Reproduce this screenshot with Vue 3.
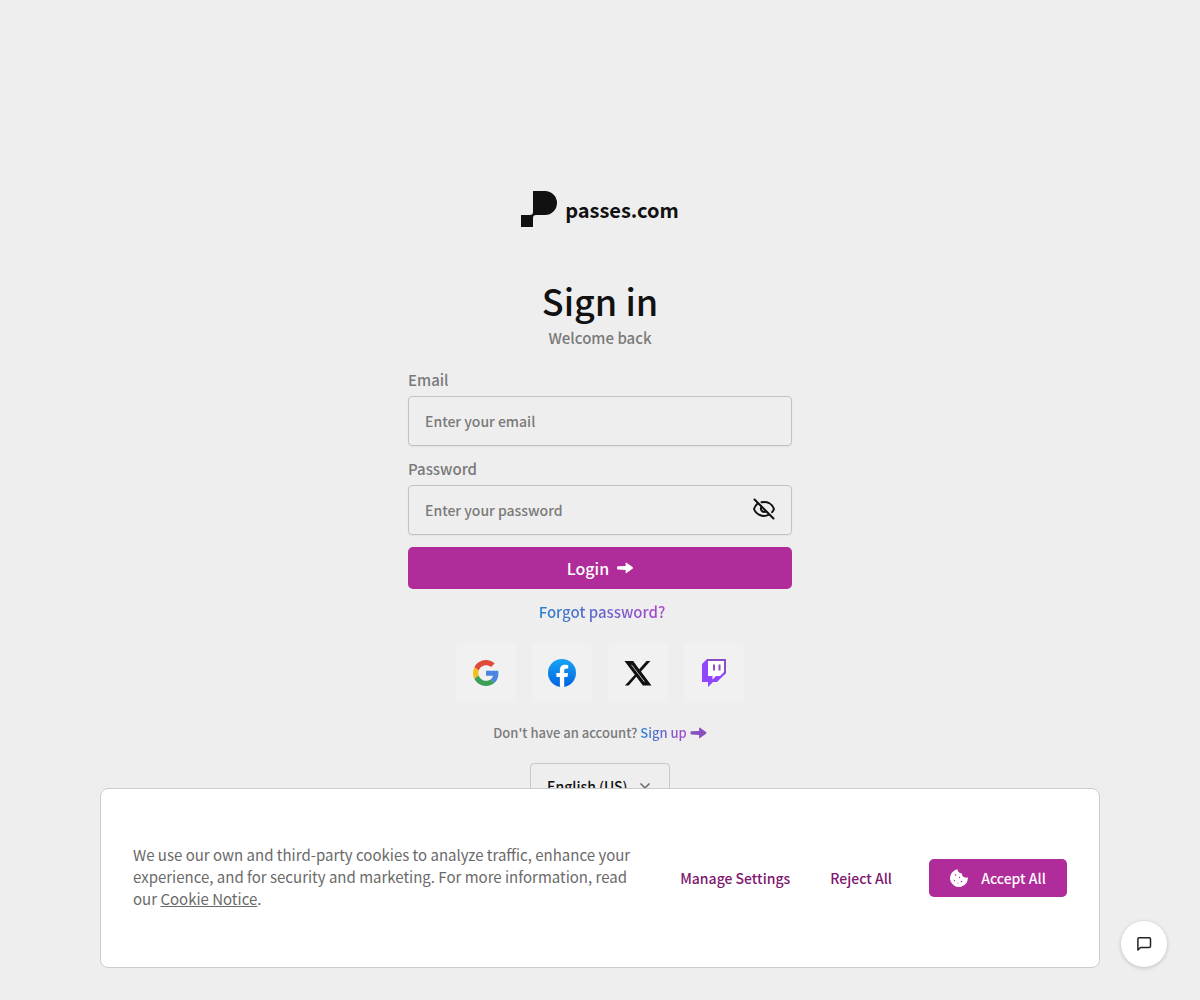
<script setup>
import { ref } from 'vue'

const email = ref('')
const password = ref('')
const showPassword = ref(false)
const language = ref('en-US')
</script>

<template>
  <div class="page">
    <main class="signin">
      <a class="brand" href="#">
        <svg width="36" height="36" viewBox="0 0 36 36" aria-hidden="true">
          <path d="M12 0h12a12 12 0 0 1 0 24h-9q-3 0-3 3v9H0V24h9q3 0 3-3z" fill="#111" />
        </svg>
        <span class="brand-name">passes.com</span>
      </a>

      <h1>Sign in</h1>
      <p class="welcome">Welcome back</p>

      <form class="form" @submit.prevent>
        <label for="email">Email</label>
        <input id="email" v-model="email" class="field" type="email" placeholder="Enter your email" />

        <label for="password">Password</label>
        <div class="password">
          <input
            id="password"
            v-model="password"
            class="field"
            :type="showPassword ? 'text' : 'password'"
            placeholder="Enter your password"
          />
          <button class="reveal" type="button" aria-label="Show password" @click="showPassword = !showPassword">
            <svg width="24" height="24" viewBox="0 0 24 24" fill="none" stroke="#111" stroke-width="2" stroke-linecap="round" aria-hidden="true">
              <path d="M2.5 2.5l19 19" />
              <path d="M9.5 5.3C15 4 20 6.500 22 12c-.5 1.300-1.100 2.300-1.900 3.200" />
              <path d="M5.600 6.500C3.900 8 2.800 9.700 2 12c2.500 6.300 9.500 8.600 14.800 5.600" />
              <path d="M9.300 9.800c-1.500 3.200 1.700 6.300 4.900 4.900" />
            </svg>
          </button>
        </div>

        <button class="primary login" type="submit">
          Login
          <svg width="16" height="12" viewBox="0 0 16 12" fill="#fff" aria-hidden="true">
            <path d="M1 4.300l7.600-.3V1.200Q8.600.2 9.500.7l6 4.300q1 .9 0 1.700l-6 4.400q-.9.500-.9-.5V8L1 7.600Q0 7.500 0 6.500V5.300Q0 4.400 1 4.300z" />
          </svg>
        </button>
      </form>

      <a class="forgot gradient" href="#">Forgot password?</a>

      <div class="socials">
        <button type="button" aria-label="Continue with Google">
          <svg width="26" height="26" viewBox="0 0 48 48" aria-hidden="true">
            <path fill="#e04a3a" d="M24 9.500c3.540 0 6.710 1.220 9.210 3.600l6.850-6.850C35.900 2.380 30.470 0 24 0 14.620 0 6.510 5.380 2.560 13.220l7.980 6.190C12.430 13.720 17.740 9.500 24 9.500z" />
            <path fill="#4a86e0" d="M46.980 24.550c0-1.570-.15-3.090-.38-4.550H24v9.020h12.940c-.58 2.960-2.260 5.480-4.780 7.180l7.730 6c4.510-4.180 7.090-10.360 7.090-17.650z" />
            <path fill="#f2c01c" d="M10.530 28.590A14.500 14.500 0 0 1 9.770 24c0-1.600.27-3.140.76-4.590l-7.980-6.190A23.900 23.900 0 0 0 0 24c0 3.880.92 7.540 2.560 10.780z" />
            <path fill="#3b9f58" d="M24 48c6.480 0 11.930-2.130 15.890-5.810l-7.730-6c-2.150 1.450-4.920 2.300-8.160 2.300-6.260 0-11.570-4.220-13.470-9.910l-7.980 6.190C6.510 42.620 14.620 48 24 48z" />
          </svg>
        </button>
        <button type="button" aria-label="Continue with Facebook">
          <svg width="28" height="28" viewBox="0 0 28 28" aria-hidden="true">
            <defs>
              <linearGradient id="fb" x1="0" y1="0" x2="0" y2="1">
                <stop offset="0" stop-color="#18a4f4" />
                <stop offset="1" stop-color="#0163e0" />
              </linearGradient>
            </defs>
            <circle cx="14" cy="14" r="14" fill="url(#fb)" />
            <path fill="#fff" d="M19.450 18.050l.62-3.930H16.200v-2.560c0-1.070.54-2.120 2.250-2.120h1.740V6.090s-1.580-.26-3.090-.26c-3.150 0-5.200 1.860-5.200 5.230v3.060H8.400v3.930h3.500v9.790a14 14 0 0 0 4.300 0v-9.790z" />
          </svg>
        </button>
        <button type="button" aria-label="Continue with X">
          <svg width="28" height="26" viewBox="0 0 28 26" aria-hidden="true">
            <path fill="#111" d="M.5 1h8.700l6 8.300L22.500 1h3.900l-9.400 10.400L27.500 25.500h-8.700l-6.500-8.700-7.600 8.700H.9l9.900-10.800z" />
            <path d="M7.500 4.800l13 17" stroke="#bbb" stroke-width="1" />
          </svg>
        </button>
        <button type="button" aria-label="Continue with Twitch">
          <svg width="24" height="28" viewBox="0 0 24 28" aria-hidden="true">
            <path fill="#9146ff" d="M5 0L0 5v18h6v5l5-5h4l9-9V0z" />
            <path fill="#8a4fc4" d="M5 0h19v14l-2 2V2H5z" />
            <path fill="#fff" d="M6 2h16v11l-4 4h-4l-3.500 3.500V17H6z" />
            <path fill="#8a4fc4" d="M11 5.500h2v6h-2zM16.500 5.500h2v6h-2z" />
          </svg>
        </button>
      </div>

      <p class="signup">
        Don't have an account?
        <a href="#">
          <span class="gradient">Sign up</span>
          <svg width="17" height="12" viewBox="0 0 16 12" fill="#8a4fbf" aria-hidden="true">
            <path d="M1 4.300l7.600-.3V1.200Q8.600.2 9.500.7l6 4.300q1 .9 0 1.700l-6 4.400q-.9.500-.9-.5V8L1 7.600Q0 7.500 0 6.500V5.300Q0 4.400 1 4.300z" />
          </svg>
        </a>
      </p>

      <div class="language">
        <select v-model="language" aria-label="Language">
          <option value="en-US">English (US)</option>
        </select>
        <svg width="10" height="6" viewBox="0 0 10 6" fill="none" stroke="#666" stroke-width="1.500" aria-hidden="true">
          <path d="M.5.5L5 5 9.500.5" />
        </svg>
      </div>
    </main>

    <section class="cookies" aria-label="Cookie consent">
      <p>
        We use our own and third-party cookies to analyze traffic, enhance your experience, and for security and
        marketing. For more information, read our <a href="#">Cookie Notice</a>.
      </p>
      <div class="cookie-actions">
        <button class="plain" type="button">Manage Settings</button>
        <button class="plain" type="button">Reject All</button>
        <button class="primary accept" type="button">
          <svg width="18" height="18" viewBox="0 0 18 18" aria-hidden="true">
            <path fill="#fff" d="M7.500.3a4.200 4.200 0 0 0 4.400 4.100 4.100 4.100 0 0 0 2.300 3.900c1.200.6 2.400.5 3.600 0A8.900 8.900 0 1 1 4 1.700C5.200.8 6.300.4 7.500.3z" />
            <g fill="#af2c9a">
              <circle cx="5.500" cy="6" r=".8" />
              <circle cx="9.500" cy="8.500" r=".7" />
              <circle cx="4.500" cy="11.500" r=".7" />
              <circle cx="11.500" cy="12.500" r=".8" />
              <circle cx="8" cy="14" r=".5" />
            </g>
          </svg>
          Accept All
        </button>
      </div>
    </section>

    <button class="chat" type="button" aria-label="Open chat">
      <svg width="16" height="16" viewBox="0 0 16 16" fill="none" stroke="#222" stroke-width="1.500" stroke-linejoin="round" aria-hidden="true">
        <path d="M3.200 1.700h10q1.300 0 1.300 1.300v7.200q0 1.300-1.300 1.300H4.500L1.900 14V3q0-1.300 1.300-1.300z" />
      </svg>
    </button>
  </div>
</template>

<style>
body {
  background: #eee;
}
</style>

<style scoped>
.page,
.page button,
.page input,
.page select {
  font-family: "Noto Sans CJK SC", "Noto Sans CJK JP", sans-serif;
  font-weight: 500;
}

.page * {
  box-sizing: border-box;
}

.page {
  min-height: 100vh;
  overflow: hidden;
  color: #7a7a7a;
  font-size: 15px;
  line-height: 22px;
}

button {
  border: 0;
  padding: 0;
  background: none;
  cursor: pointer;
}

a {
  color: inherit;
  text-decoration: none;
}

svg {
  flex: none;
}

.signin {
  display: flex;
  flex-direction: column;
  align-items: center;
  padding: 191px 16px 32px;
}

.brand {
  display: flex;
  align-items: center;
  gap: 8px;
  color: #111;
}

.brand-name {
  padding-top: 2px;
  font-size: 20px;
  font-weight: 700;
  line-height: 28px;
}

h1 {
  margin: 51px 0 5px;
  color: #111;
  font-size: 36px;
  font-weight: 500;
  line-height: 44px;
}

.welcome {
  margin: 0;
}

.form {
  display: flex;
  flex-direction: column;
  width: 100%;
  max-width: 384px;
  margin-top: 20px;
}

.form label {
  margin-bottom: 5px;
}

.field {
  width: 100%;
  height: 50px;
  margin-bottom: 12px;
  padding: 0 16px;
  border: 1px solid #c2c2c2;
  border-radius: 4px;
  outline: 0;
  background: transparent;
  box-shadow: 0 1px 2px rgba(0, 0, 0, 0.05);
  color: #111;
  font-size: 14px;
}

.field::placeholder {
  color: #7a7a7a;
  opacity: 1;
}

.password {
  position: relative;
}

.reveal {
  position: absolute;
  top: 12px;
  right: 16px;
  display: flex;
}

.primary {
  display: flex;
  align-items: center;
  justify-content: center;
  border-radius: 5px;
  background: #af2c9a;
  color: #fff;
}

.login {
  gap: 8px;
  height: 42px;
  font-size: 16px;
}

.gradient {
  background: linear-gradient(90deg, #2683ca, #ac45cc);
  background-clip: text;
  -webkit-background-clip: text;
  color: transparent;
}

.forgot {
  margin: 12px 0 0 4px;
}

.socials {
  display: flex;
  gap: 16px;
  margin-top: 20px;
}

.socials button {
  display: flex;
  align-items: center;
  justify-content: center;
  width: 60px;
  height: 60px;
  border-radius: 4px;
  background: #f1f1f1;
}

.signup {
  display: flex;
  gap: 3px;
  margin: 20px 0 0;
  font-size: 13px;
  line-height: 20px;
}

.signup a {
  display: flex;
  align-items: center;
  gap: 3px;
}

.language {
  position: relative;
  margin-top: 20px;
}

.language select {
  width: 140px;
  height: 46px;
  padding: 0 16px;
  border: 1px solid #c8c8c8;
  border-radius: 4px;
  appearance: none;
  background: transparent;
  color: #111;
  font-size: 14px;
}

.language svg {
  position: absolute;
  top: 20px;
  right: 20px;
  pointer-events: none;
}

.cookies {
  position: fixed;
  right: 16px;
  bottom: 32px;
  left: 16px;
  display: flex;
  align-items: center;
  justify-content: space-between;
  gap: 24px;
  max-width: 1000px;
  min-height: 180px;
  margin: 0 auto;
  padding: 32px;
  border: 1px solid #ccc;
  border-radius: 8px;
  background: #fff;
}

.cookies p {
  flex: 1;
  max-width: 512px;
  margin: 0 0 2px;
  color: #6a6a6a;
  font-weight: 400;
}

.cookies p a {
  text-decoration: underline;
}

.cookie-actions {
  display: flex;
  align-items: center;
}

.plain {
  margin-right: 40px;
  color: #80166f;
  font-size: 14px;
}

.plain + .primary {
  margin-left: -3px;
}

.accept {
  gap: 13px;
  width: 138px;
  height: 38px;
  font-size: 14px;
}

.chat {
  position: fixed;
  right: 33px;
  bottom: 33px;
  display: flex;
  align-items: center;
  justify-content: center;
  width: 46px;
  height: 46px;
  border-radius: 50%;
  background: #fff;
  box-shadow: 0 1px 4px rgba(0, 0, 0, 0.2);
}
</style>
